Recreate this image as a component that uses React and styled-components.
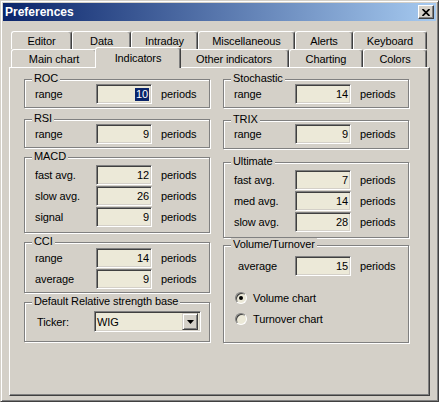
import React from 'react';
import styled, { createGlobalStyle } from 'styled-components';

const FACE = '#d4d0c8';
const SHADOW = '#808080';
const DARK = '#404040';
const FIELD = '#ece9d8';

const GlobalStyle = createGlobalStyle`
  html, body {
    margin: 0;
    padding: 0;
    background: ${FACE};
  }
  body {
    font-family: 'Liberation Sans', Arial, sans-serif;
    font-size: 11px;
    letter-spacing: -0.1px;
    color: #000;
  }
`;

const topTabs = [
  { label: 'Editor', width: 61 },
  { label: 'Data', width: 59 },
  { label: 'Intraday', width: 67 },
  { label: 'Miscellaneous', width: 97 },
  { label: 'Alerts', width: 58 },
  { label: 'Keyboard', width: 74 },
];

const frontTabs = [
  { label: 'Main chart', width: 86 },
  { label: 'Indicators', width: 82, active: true },
  { label: 'Other indicators', width: 110 },
  { label: 'Charting', width: 74 },
  { label: 'Colors', width: 64 },
];

const PeriodRow = ({ label, value, selected, labelWidth, indent }) => (
  <Row $labelWidth={labelWidth} $indent={indent}>
    <span>{label}</span>
    <Field>{selected ? <Selection>{value}</Selection> : value}</Field>
    <Unit>periods</Unit>
  </Row>
);

const App = () => {
  return (
    <>
      <GlobalStyle />
      <Window>
        <TitleBar>
          <span>Preferences</span>
          <CloseButton>
            <svg width="8" height="7" viewBox="0 0 8 7">
              <path d="M0.5 0 L7.5 7 M7.5 0 L0.5 7" stroke="#000" strokeWidth="1.7" />
            </svg>
          </CloseButton>
        </TitleBar>

        <Body>
          <TabRow>
            {topTabs.map((tab) => (
              <Tab key={tab.label} $w={tab.width}>
                {tab.label}
              </Tab>
            ))}
          </TabRow>
          <TabRow>
            {frontTabs.map((tab) => (
              <Tab key={tab.label} $w={tab.width} $active={tab.active}>
                {tab.label}
              </Tab>
            ))}
          </TabRow>

          <Panel>
            <Columns>
              <Column>
                <Group $pad="4px 0 3px 10px">
                  <Legend>ROC</Legend>
                  <PeriodRow label="range" value="10" selected />
                </Group>
                <Group $mt={11} $pad="4px 0 3px 10px">
                  <Legend>RSI</Legend>
                  <PeriodRow label="range" value="9" />
                </Group>
                <Group $mt={9} $pad="7px 0 5px 10px">
                  <Legend>MACD</Legend>
                  <PeriodRow label="fast avg." value="12" />
                  <PeriodRow label="slow avg." value="26" />
                  <PeriodRow label="signal" value="9" />
                </Group>
                <Group $mt={9} $pad="5px 0 3px 10px">
                  <Legend>CCI</Legend>
                  <PeriodRow label="range" value="14" />
                  <PeriodRow label="average" value="9" />
                </Group>
                <Group $mt={9} $pad="8px 0 9px 10px">
                  <Legend>Default Relative strength base</Legend>
                  <TickerRow>
                    <span>Ticker:</span>
                    <Combo>
                      <span>WIG</span>
                      <DropButton>
                        <svg width="7" height="4" viewBox="0 0 7 4">
                          <polygon points="0,0 7,0 3.5,4" fill="#000" />
                        </svg>
                      </DropButton>
                    </Combo>
                  </TickerRow>
                </Group>
              </Column>

              <Column>
                <Group $pad="4px 0 3px 10px">
                  <Legend>Stochastic</Legend>
                  <PeriodRow label="range" value="14" />
                </Group>
                <Group $mt={12} $pad="3px 0 4px 10px">
                  <Legend>TRIX</Legend>
                  <PeriodRow label="range" value="9" />
                </Group>
                <Group $mt={13} $pad="7px 0 5px 10px">
                  <Legend>Ultimate</Legend>
                  <PeriodRow label="fast avg." value="7" />
                  <PeriodRow label="med avg." value="14" />
                  <PeriodRow label="slow avg." value="28" />
                </Group>
                <Group $mt={7} $pad="10px 0 15px 10px">
                  <Legend>Volume/Turnover</Legend>
                  <PeriodRow label="average" value="15" indent={4} labelWidth={57} />
                  <RadioList>
                    <RadioRow>
                      <Radio $checked />
                      <span>Volume chart</span>
                    </RadioRow>
                    <RadioRow>
                      <Radio />
                      <span>Turnover chart</span>
                    </RadioRow>
                  </RadioList>
                </Group>
              </Column>
            </Columns>
          </Panel>
        </Body>
      </Window>
    </>
  );
};

export default App;

const Window = styled.div`
  width: 439px;
  height: 402px;
  box-sizing: border-box;
  display: flex;
  flex-direction: column;
  padding: 2px;
  background: ${FACE};
  border: 1px solid;
  border-color: ${FACE} ${DARK} ${DARK} ${FACE};
  box-shadow: inset 1px 1px #fff, inset -1px -1px ${SHADOW};
`;

const TitleBar = styled.div`
  flex: none;
  height: 18px;
  display: flex;
  align-items: center;
  justify-content: space-between;
  padding: 0 2px;
  background: linear-gradient(to right, #0a246a, #a6caf0);
  color: #fff;
  font-size: 12px;
  font-weight: bold;
  letter-spacing: 0;
`;

const CloseButton = styled.div`
  width: 16px;
  height: 14px;
  box-sizing: border-box;
  display: flex;
  align-items: center;
  justify-content: center;
  background: ${FACE};
  border: 1px solid;
  border-color: #fff ${DARK} ${DARK} #fff;
  box-shadow: inset -1px -1px ${SHADOW};
`;

const Body = styled.div`
  flex: 1;
  display: flex;
  flex-direction: column;
  padding: 10px 6px 3px;
`;

const TabRow = styled.div`
  display: flex;
  align-items: flex-start;
  height: 18px;
  margin: 0 2px;
`;

const Tab = styled.div`
  position: relative;
  z-index: ${(p) => (p.$active ? 1 : 0)};
  flex: none;
  box-sizing: border-box;
  width: ${(p) => (p.$active ? p.$w + 4 : p.$w)}px;
  height: ${(p) => (p.$active ? 21 : 18)}px;
  margin: ${(p) => (p.$active ? '-2px -2px 0' : '0')};
  display: flex;
  align-items: center;
  justify-content: center;
  padding-bottom: ${(p) => (p.$active ? 1 : 0)}px;
  background: ${FACE};
  border-top: 1px solid #fff;
  border-left: 1px solid #fff;
  border-right: 1px solid ${DARK};
  border-radius: 3px 3px 0 0;
  box-shadow: inset -1px 0 ${SHADOW};
  white-space: nowrap;
`;

const Panel = styled.div`
  flex: 1;
  padding: 11px 0 0 14px;
  border: 1px solid;
  border-color: #fff ${DARK} ${DARK} #fff;
  box-shadow: inset -1px -1px ${SHADOW};
`;

const Columns = styled.div`
  display: grid;
  grid-template-columns: 186px 186px;
  column-gap: 13px;
`;

const Column = styled.div`
  display: flex;
  flex-direction: column;
`;

const Group = styled.div`
  position: relative;
  display: flex;
  flex-direction: column;
  gap: 1px;
  margin-top: ${(p) => p.$mt || 0}px;
  padding: ${(p) => p.$pad};
  border: 1px solid ${SHADOW};
  box-shadow: inset 1px 1px #fff, 1px 1px #fff;
`;

const Legend = styled.span`
  position: absolute;
  top: -8px;
  left: 7px;
  padding: 0 2px;
  line-height: 13px;
  background: ${FACE};
  white-space: nowrap;
`;

const Row = styled.div`
  display: grid;
  grid-template-columns: ${(p) => p.$labelWidth || 61}px 56px auto;
  align-items: center;
  height: 20px;
  padding-left: ${(p) => p.$indent || 0}px;
  white-space: nowrap;
`;

const Unit = styled.span`
  padding-left: 9px;
`;

const Field = styled.div`
  box-sizing: border-box;
  height: 20px;
  padding-right: 2px;
  text-align: right;
  line-height: 18px;
  background: ${FIELD};
  border: 1px solid;
  border-color: ${SHADOW} #fff #fff ${SHADOW};
  box-shadow: inset 1px 1px ${DARK}, inset -1px -1px ${FACE};
`;

const Selection = styled.span`
  display: inline-block;
  padding: 0 1px;
  line-height: 13px;
  background: #0a246a;
  color: #fff;
`;

const TickerRow = styled.div`
  display: grid;
  grid-template-columns: 57px 107px;
  align-items: center;
  padding-left: 2px;
`;

const Combo = styled.div`
  box-sizing: border-box;
  height: 21px;
  display: flex;
  align-items: center;
  justify-content: space-between;
  padding: 2px;
  background: ${FIELD};
  border: 1px solid;
  border-color: ${SHADOW} #fff #fff ${SHADOW};
  box-shadow: inset 1px 1px ${DARK}, inset -1px -1px ${FACE};
`;

const DropButton = styled.div`
  box-sizing: border-box;
  width: 16px;
  height: 17px;
  display: flex;
  align-items: center;
  justify-content: center;
  background: ${FACE};
  border: 1px solid;
  border-color: ${FACE} ${DARK} ${DARK} ${FACE};
  box-shadow: inset 1px 1px #fff, inset -1px -1px ${SHADOW};
`;

const RadioList = styled.div`
  display: flex;
  flex-direction: column;
  gap: 5px;
  margin-top: 13px;
  padding-left: 1px;
`;

const RadioRow = styled.div`
  display: flex;
  align-items: center;
  gap: 6px;
  height: 16px;
`;

const Radio = styled.span`
  position: relative;
  flex: none;
  box-sizing: border-box;
  width: 12px;
  height: 12px;
  border-radius: 50%;
  background: ${FIELD};
  border: 1px solid;
  border-color: ${SHADOW} #fff #fff ${SHADOW};
  box-shadow: inset 1px 1px ${DARK};

  &::after {
    content: '';
    display: ${(p) => (p.$checked ? 'block' : 'none')};
    position: absolute;
    left: 3px;
    top: 3px;
    width: 4px;
    height: 4px;
    border-radius: 50%;
    background: #000;
  }
`;
